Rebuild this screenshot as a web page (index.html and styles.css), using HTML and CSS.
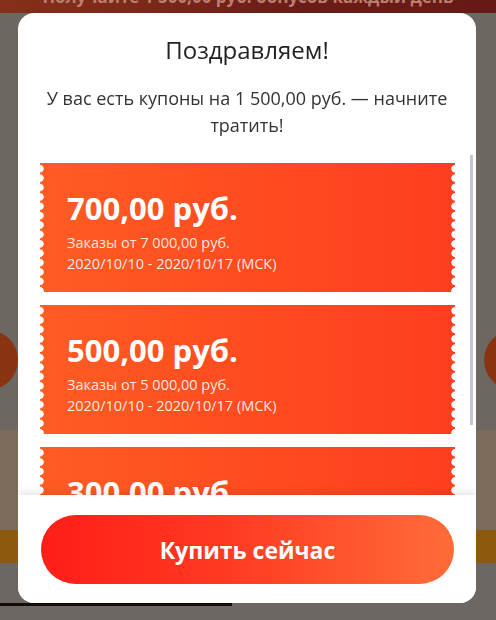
FILE: index.html
```html
<!DOCTYPE html>
<html lang="ru">
<head>
    <meta charset="UTF-8">
    <title>Купоны</title>
    <link rel="stylesheet" href="styles.css">
</head>
<body>
    <div class="page">
        <div class="promo-strip">
            <span>Получайте 1 500,00 руб. бонусов каждый день</span>
        </div>
        <div class="page-main">
            <div class="side-row">
                <div class="side-dot left"></div>
                <div class="side-dot right"></div>
            </div>
        </div>
        <div class="page-band"></div>
        <div class="page-bar"></div>
        <div class="page-bottom">
            <div class="page-line"></div>
        </div>
    </div>

    <div class="overlay">
        <div class="modal">
            <div class="modal-head">
                <h1 class="modal-title">Поздравляем!</h1>
                <p class="modal-text">У вас есть купоны на 1 500,00 руб. — начните тратить!</p>
            </div>

            <div class="coupon-list">
                <div class="coupon">
                    <div class="coupon-amount">700,00 руб.</div>
                    <div class="coupon-info">Заказы от 7 000,00 руб.</div>
                    <div class="coupon-info">2020/10/10 - 2020/10/17 (МСК)</div>
                </div>
                <div class="coupon">
                    <div class="coupon-amount">500,00 руб.</div>
                    <div class="coupon-info">Заказы от 5 000,00 руб.</div>
                    <div class="coupon-info">2020/10/10 - 2020/10/17 (МСК)</div>
                </div>
                <div class="coupon">
                    <div class="coupon-amount">300,00 руб.</div>
                    <div class="coupon-info">Заказы от 3 000,00 руб.</div>
                    <div class="coupon-info">2020/10/10 - 2020/10/17 (МСК)</div>
                </div>
            </div>
            <div class="scroll-thumb"></div>

            <div class="modal-foot">
                <button class="buy-btn">Купить сейчас</button>
            </div>
        </div>
    </div>
</body>
</html>
```

FILE: styles.css
```css
html, body {
    margin: 0;
    padding: 0;
    height: 100%;
    overflow: hidden;
}
body {
    font-family: "Open Sans", "Noto Sans", Arial, sans-serif;
    background: #6c6761;
}

/* dimmed page behind the popup */
.page {
    display: flex;
    flex-direction: column;
    height: 620px;
}
.promo-strip {
    height: 13px;
    overflow: hidden;
    background: linear-gradient(90deg, #84301a 0%, #7a2818 30%, #6a1c17 60%, #661a16 100%);
    text-align: center;
}
.promo-strip span {
    display: block;
    margin-top: -13px;
    font-size: 17px;
    line-height: 20px;
    font-weight: 700;
    color: #bd7e70;
}
.page-main {
    height: 417px;
    background: #6d6761;
    display: flex;
    flex-direction: column;
    justify-content: flex-end;
    padding-bottom: 40px;
    box-sizing: border-box;
}
.side-row {
    display: flex;
    justify-content: space-between;
}
.side-dot {
    width: 60px;
    height: 60px;
    border-radius: 50%;
    background: #8a3311;
}
.side-dot.left {
    margin-left: -42px;
}
.side-dot.right {
    margin-right: -48px;
}
.page-band {
    height: 100px;
    background: #7a6b5b;
}
.page-bar {
    height: 33px;
    background: #8b5a0c;
}
.page-bottom {
    flex: 1;
    background: #6c6762;
    padding-top: 40px;
}
.page-line {
    width: 232px;
    height: 3px;
    background: #120c08;
}

/* popup */
.overlay {
    position: fixed;
    inset: 0;
}
.modal {
    position: relative;
    width: 458px;
    height: 590px;
    margin: 13px 0 0 18px;
    background: #fff;
    border-radius: 16px;
    display: flex;
    flex-direction: column;
    overflow: hidden;
}
.modal-head {
    padding: 22px 16px 0;
    height: 137px;
    box-sizing: border-box;
    text-align: center;
    color: #222;
}
.modal-title {
    margin: 0;
    font-size: 24px;
    line-height: 30px;
    font-weight: 400;
}
.modal-text {
    margin: 20px 0 0;
    font-size: 18px;
    line-height: 27px;
    color: #333;
}

.coupon-list {
    height: 345px;
    overflow: hidden;
    padding: 13px 21px 13px 22px;
    box-sizing: border-box;
    display: flex;
    flex-direction: column;
    gap: 13px;
}
.scroll-thumb {
    position: absolute;
    top: 142px;
    right: 3px;
    width: 3px;
    height: 270px;
    background: #c4c8cc;
}

.coupon {
    position: relative;
    flex: none;
    height: 129px;
    padding: 26px 27px 0;
    box-sizing: border-box;
    background: linear-gradient(90deg, #ff5c24 0%, #ff4d20 45%, #fe3e1f 100%);
    color: #fff;
}
.coupon::before,
.coupon::after {
    content: "";
    position: absolute;
    top: 0;
    bottom: 0;
    width: 8px;
    background: radial-gradient(circle at 4px 50%, #fff 3.4px, transparent 4px) 0 1px / 8px 9.4px repeat-y;
}
.coupon::before {
    left: -4px;
}
.coupon::after {
    right: -4px;
}
.coupon-amount {
    font-size: 31px;
    line-height: 38px;
    font-weight: 700;
    margin-bottom: 5px;
}
.coupon-info {
    font-size: 14.5px;
    line-height: 21px;
    color: rgba(255, 255, 255, 0.88);
}

.modal-foot {
    position: relative;
    flex: 1;
    padding: 20px 22px 0 23px;
    background: #fff;
    box-shadow: 0 -4px 6px rgba(0, 0, 0, 0.08);
}
.buy-btn {
    display: block;
    width: 413px;
    height: 69px;
    border: none;
    border-radius: 35px;
    background: linear-gradient(90deg, #ff1d18 0%, #ff3a22 45%, #ff6c38 100%);
    color: #fff;
    font-family: inherit;
    font-size: 23px;
    font-weight: 700;
    cursor: pointer;
}
```
